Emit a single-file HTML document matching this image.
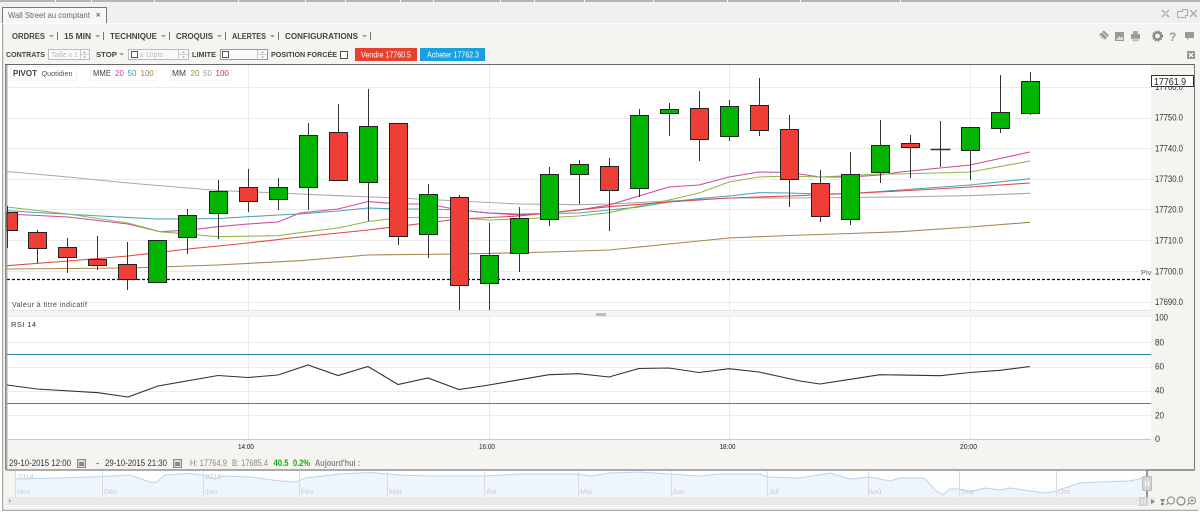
<!DOCTYPE html>
<html lang="fr"><head><meta charset="utf-8"><title>Wall Street au comptant</title>
<style>
html,body{margin:0;padding:0;width:1200px;height:512px;overflow:hidden;background:#fff}
body{position:relative;font-family:"Liberation Sans",Arial,sans-serif}
svg{position:absolute;left:0;top:0}
text{font-family:"Liberation Sans",Arial,sans-serif}
.b{font-weight:bold;fill:#444;font-size:8px}
.c{font-weight:bold;fill:#444;font-size:7.5px}
.p{font-size:9px;fill:#333}
</style></head><body>
<svg width="1200" height="512" viewBox="0 0 1200 512" xmlns="http://www.w3.org/2000/svg">
<!-- window chrome -->
<rect width="1200" height="512" fill="#f5f4f0"/>
<rect width="1200" height="23" fill="#f0f0f0"/>
<rect y="0" width="1200" height="2" fill="#b4b4b4"/>
<path d="M55.5 0V2M91.5 0V2M154.5 0V2M238.5 0V2M305.5 0V2M345.5 0V2M400.5 0V2M433.5 0V2M500.5 0V2M534.5 0V2M584.5 0V2M653.5 0V2M727.5 0V2M800.5 0V2M900.5 0V2" stroke="#fff"/>
<rect y="23" width="1200" height="1" fill="#fff"/>
<path d="M2.5 23V7.5H106.5V23" fill="#f7f7f7" stroke="#777"/>
<text x="8" y="18" font-size="8.5" fill="#666" textLength="82" lengthAdjust="spacingAndGlyphs">Wall Street au comptant</text>
<path d="M96.5 13l3.500 3.500M100 13l-3.500 3.500" stroke="#777" stroke-width="1"/>
<!-- window icons -->
<path d="M1162 10l3 3M1169 10l-3 3M1162 17l3-3M1169 17l-3-3" stroke="#aaa" stroke-width="1.5"/>
<path d="M1177.5 11.5h5v-2h5v6h-2v2h-8z" fill="none" stroke="#aaa"/>
<path d="M1190 10l7 7M1197 10l-7 7" stroke="#aaa" stroke-width="1.3"/>
<!-- toolbar -->
<text class="b" x="12" y="39" textLength="33" lengthAdjust="spacingAndGlyphs">ORDRES</text>
<text class="b" x="64" y="39" textLength="27" lengthAdjust="spacingAndGlyphs">15 MIN</text>
<text class="b" x="110" y="39" textLength="47" lengthAdjust="spacingAndGlyphs">TECHNIQUE</text>
<text class="b" x="176" y="39" textLength="37" lengthAdjust="spacingAndGlyphs">CROQUIS</text>
<text class="b" x="232" y="39" textLength="34" lengthAdjust="spacingAndGlyphs">ALERTES</text>
<text class="b" x="285" y="39" textLength="73" lengthAdjust="spacingAndGlyphs">CONFIGURATIONS</text>
<path d="M49 35h5l-2.5 2.5zM95 35h5l-2.5 2.5zM161 35h5l-2.5 2.5zM217 35h5l-2.5 2.5zM270 35h5l-2.5 2.5zM362 35h5l-2.5 2.5z" fill="#999"/>
<path d="M57.5 32V40M103.5 32V40M169.5 32V40M225.5 32V40M278.5 32V40M370.5 32V40" stroke="#777"/>
<!-- toolbar right icons -->
<path d="M1099 35l5-5 5 5-5 6z" fill="#999"/><path d="M1100 33l4-3 4 4M1100 37l5 4 3-3M1101 31l6 6M1100 35l5 5" stroke="#f5f4f0" fill="none" stroke-width=".7"/>
<rect x="1115" y="32" width="9" height="9" fill="#999"/><path d="M1116 40l3-4 2 2 2-2v4z" fill="#ddd"/>
<rect x="1131" y="34" width="9" height="5" rx="1" fill="#999"/><rect x="1133" y="31" width="5" height="3" fill="#aaa"/><rect x="1133" y="38" width="5" height="3" fill="#ccc" stroke="#999" stroke-width=".5"/>
<circle cx="1157.5" cy="36" r="3.5" fill="none" stroke="#888" stroke-width="2.2"/><circle cx="1157.5" cy="36" r="5" fill="none" stroke="#888" stroke-width="1.3" stroke-dasharray="1.5 1.5"/>
<text x="1169" y="41" font-size="12" font-weight="bold" fill="#999">?</text>
<path d="M1185 32h9v6h-5l-2 2v-2h-2z" fill="#999"/>
<!-- row 2 -->
<text class="c" x="6" y="57" textLength="39" lengthAdjust="spacingAndGlyphs">CONTRATS</text>
<text class="c" x="96" y="57" textLength="21" lengthAdjust="spacingAndGlyphs">STOP</text>
<text class="c" x="192" y="57" textLength="24" lengthAdjust="spacingAndGlyphs">LIMITE</text>
<text class="c" x="271" y="57" textLength="66" lengthAdjust="spacingAndGlyphs">POSITION FORCÉE</text>
<path d="M119 53h5l-2.5 2.5z" fill="#999"/>
<rect x="48.5" y="49.5" width="41" height="10" fill="#fafafa" stroke="#bbb"/><path d="M80.5 50V59M81 54.5H89" stroke="#ccc"/>
<text x="51" y="57" font-size="7" fill="#bbb" textLength="27" lengthAdjust="spacingAndGlyphs">Taille ≥ 1</text>
<path d="M83 53l1.5-1.500 1.500 1.500zM83 56.5l1.500 1.500 1.500-1.500z" fill="#999"/>
<rect x="128.5" y="49.5" width="60" height="10" fill="#fafafa" stroke="#bbb"/><path d="M178.5 50V59M179 54.5H188" stroke="#ccc"/>
<rect x="131.5" y="51.5" width="6" height="6" fill="#fff" stroke="#555"/>
<text x="140" y="57" font-size="7" fill="#bbb">≥ 10pts</text>
<path d="M182 53l1.5-1.500 1.500 1.500zM182 56.5l1.500 1.500 1.500-1.500z" fill="#999"/>
<rect x="220.5" y="49.5" width="47" height="10" fill="#fafafa" stroke="#999"/><path d="M257.5 50V59M258 54.5H267" stroke="#ccc"/>
<rect x="222.5" y="51.5" width="6" height="6" fill="#fff" stroke="#555"/>
<path d="M261 53l1.5-1.500 1.500 1.500zM261 56.5l1.500 1.500 1.500-1.500z" fill="#999"/>
<rect x="340.5" y="51.5" width="7" height="7" fill="#fff" stroke="#555"/>
<rect x="355" y="48" width="62" height="13" fill="#e8402f"/>
<text x="361" y="57.5" font-size="8" fill="#fff" textLength="50" lengthAdjust="spacingAndGlyphs">Vendre 17760.5</text>
<rect x="420" y="48" width="65" height="13" fill="#189fe0"/>
<text x="427" y="57.5" font-size="8" fill="#fff" textLength="52" lengthAdjust="spacingAndGlyphs">Acheter 17762.3</text>
<rect x="1187" y="51" width="8" height="8" fill="#999"/><path d="M1189 53l4 4M1193 53l-4 4" stroke="#fff" stroke-width="1.2"/>

<!-- chart frame -->
<rect x="6" y="65" width="1188" height="405" fill="#f5f4f0"/>
<rect x="7" y="65" width="1144" height="245" fill="#fff"/>
<rect x="7" y="317" width="1144" height="122" fill="#fff"/>
<path d="M1194.5 64.5H5.5V470" fill="none" stroke="#666"/>
<path d="M6.5 65V470" stroke="#aaa" stroke-width="2"/>
<path d="M1194.5 64V470" stroke="#777"/>
<rect x="6" y="469" width="1140" height="2" fill="#aaa"/><rect x="1146" y="469" width="49" height="2" fill="#999"/>
<!-- grid -->
<path d="M7 87.5H1151M7 118.5H1151M7 148.5H1151M7 179.5H1151M7 209.5H1151M7 240.5H1151M7 271.5H1151M7 302.5H1151M7 342.5H1151M7 367.5H1151M7 391.5H1151M7 415.5H1151M248.5 65V310M489.5 65V310M729.5 65V310M970.5 65V310M248.5 317V439M489.5 317V439M729.5 317V439M970.5 317V439" stroke="#ebebeb" fill="none"/>
<path d="M7 310.5H1151" stroke="#e4e4e0"/><path d="M7 316.5H1151" stroke="#ededea"/>
<rect x="596" y="313" width="10" height="3" fill="#bbb"/>
<path d="M7 439.5H1151" stroke="#c8c8c8"/>
<!-- dashed pivot -->
<path d="M7 279.5H1151" stroke="#111" stroke-width="1.2" stroke-dasharray="3 2"/>
<!-- moving averages -->
<g fill="none" stroke-width="1.1">
<polyline stroke="#a8a8a8" points="7,171.5 68,177 128,183 188,188 218,190.5 278,193 338,195.7 398,198 459,201 519,204 579,204.7 609,204 669,201 729,198 789,198 850,197.5 900,197 970,195.6 1030,193.3"/>
<polyline stroke="#4ba3b5" points="7,210.7 37,212.5 100,216 158,219 218,218.5 278,215 300,214 338,211 368,208 398,209 428,209 459,210 489,213 519,214 579,213 609,210 639,207 669,202 699,198.5 729,196 759,192.7 789,193 820,194 850,193.7 900,190 970,185 1030,178.7"/>
<polyline stroke="#cc4aa0" points="7,214 68,217 128,224 160,231.7 190,230 218,226.7 248,224 278,222 300,213 338,209 368,201.5 398,204 428,204 459,210 489,213 519,215 549,213 579,210 609,205 639,196 669,187 699,185 729,177 759,172 789,172.5 820,177 850,177 880,175 900,172 970,165 1030,152"/>
<polyline stroke="#8fb84a" points="7,207 68,214 128,223 160,231.7 218,236.7 278,235.7 300,232.7 338,228 368,221.5 398,218 428,217 459,218 489,220 519,219 579,216 609,212.7 639,206 669,200 699,193 729,182 759,177 789,176 820,177 850,175.5 880,174 900,174 970,172 1030,161"/>
<polyline stroke="#e0474a" points="7,265.7 68,261 128,256 188,249 248,243 300,237 368,230 459,219 519,216 609,206.7 669,202 729,198 789,196 850,193.5 900,191 970,187 1030,183"/>
<polyline stroke="#a8874f" points="7,269 68,268.5 128,268 218,265 300,260.7 368,255 459,254 549,252 609,250 669,244 729,238 789,235.5 850,233.5 900,231.7 970,227 1030,222.3"/>
</g>
<!-- wicks -->
<path stroke="#333" fill="none" d="M7.5 206V248M37.5 230V263M67.5 238V273M97.5 236V270M127.5 242V290M157.5 240V282M187.5 209V254M218.5 180V239M248.5 169V212M278.5 178V210M308.5 123V210M338.5 104V180M368.5 89V221M398.5 123V245M428.5 184V258M459.5 195V310M489.5 223V310M519.5 207V272M549.5 167V226M579.5 160V204M609.5 158V231M639.5 109V197M669.5 103V136M699.5 91V161M729.5 100V141M759.5 78V136M789.5 115V207M820.5 170V222M850.5 152V225M880.5 120V183M910.5 135V178M940.5 121V167M970.5 127V180M1000.5 75V133M1030.5 72V115"/>
<!-- red bodies -->
<g fill="#ef3e36" stroke="#222">
<rect x="7" y="212.5" width="10.5" height="18"/>
<rect x="28.5" y="232.5" width="18" height="16"/>
<rect x="58.5" y="247.5" width="18" height="10"/>
<rect x="88.5" y="259.5" width="18" height="6"/>
<rect x="118.5" y="264.5" width="18" height="15"/>
<rect x="239.5" y="187.5" width="18" height="14"/>
<rect x="329.5" y="132.5" width="18" height="48"/>
<rect x="389.5" y="123.5" width="18" height="113"/>
<rect x="450.5" y="197.5" width="18" height="88"/>
<rect x="600.5" y="166.5" width="18" height="24"/>
<rect x="690.5" y="108.5" width="18" height="31"/>
<rect x="750.5" y="105.5" width="18" height="25"/>
<rect x="780.5" y="129.5" width="18" height="50"/>
<rect x="811.5" y="183.5" width="18" height="33"/>
<rect x="901.5" y="143.5" width="18" height="4"/>
</g>
<!-- green bodies -->
<g fill="#00b400" stroke="#222">
<rect x="148.5" y="240.5" width="18" height="42"/>
<rect x="178.5" y="215.5" width="18" height="22"/>
<rect x="209.5" y="191.5" width="18" height="22"/>
<rect x="269.5" y="187.5" width="18" height="12"/>
<rect x="299.5" y="135.5" width="18" height="52"/>
<rect x="359.5" y="126.5" width="18" height="56"/>
<rect x="419.5" y="194.5" width="18" height="40"/>
<rect x="480.5" y="255.5" width="18" height="28"/>
<rect x="510.5" y="218.5" width="18" height="35"/>
<rect x="540.5" y="174.5" width="18" height="45"/>
<rect x="570.5" y="164.5" width="18" height="10"/>
<rect x="630.5" y="115.5" width="18" height="73"/>
<rect x="660.5" y="109.5" width="18" height="4"/>
<rect x="720.5" y="106.5" width="18" height="30"/>
<rect x="841.5" y="174.5" width="18" height="45"/>
<rect x="871.5" y="145.5" width="18" height="27"/>
<rect x="961.5" y="127.5" width="18" height="23"/>
<rect x="991.5" y="112.5" width="18" height="16"/>
<rect x="1021.5" y="81.5" width="18" height="32"/>
</g>
<path d="M930.5 149.5H950.5" stroke="#333" stroke-width="1.5"/>
<!-- legend -->
<g fill="#fff" stroke="#f3f3f3"><rect x="10.5" y="66.5" width="66" height="14"/><rect x="90.5" y="66.5" width="66" height="14"/><rect x="170.5" y="66.5" width="61" height="14"/></g>
<text class="b" x="13" y="76" textLength="24" lengthAdjust="spacingAndGlyphs">PIVOT</text>
<text x="41.5" y="76" font-size="7.5" fill="#555" textLength="31" lengthAdjust="spacingAndGlyphs">Quotidien</text>
<text x="93" y="76" font-size="8" fill="#444" textLength="18" lengthAdjust="spacingAndGlyphs">MME</text><text x="115" y="76" font-size="8" fill="#c8409a">20</text><text x="127.5" y="76" font-size="8" fill="#4a97b5">50</text><text x="140.5" y="76" font-size="8" fill="#a0804a">100</text>
<text x="172" y="76" font-size="8" fill="#444" textLength="14" lengthAdjust="spacingAndGlyphs">MM</text><text x="190.5" y="76" font-size="8" fill="#6fa53a">20</text><text x="203" y="76" font-size="8" fill="#999">50</text><text x="215.5" y="76" font-size="8" fill="#d03a3a">100</text>
<text x="12" y="307" font-size="7" fill="#444" textLength="75" lengthAdjust="spacing">Valeur à titre <tspan fill="#7a3a6a">i</tspan>ndicatif</text>
<rect x="8" y="318" width="32" height="13" fill="#fff"/>
<text x="11" y="327" font-size="7.5" fill="#333" textLength="25" lengthAdjust="spacing">RSI 14</text>
<text x="1141" y="275" font-size="7.5" fill="#666">Piv</text>
<!-- price scale -->
<g lengthAdjust="spacingAndGlyphs">
<text class="p" x="1155" y="120.5" textLength="28" lengthAdjust="spacingAndGlyphs">17750.0</text>
<text class="p" x="1155" y="151.5" textLength="28" lengthAdjust="spacingAndGlyphs">17740.0</text>
<text class="p" x="1155" y="182" textLength="28" lengthAdjust="spacingAndGlyphs">17730.0</text>
<text class="p" x="1155" y="212.5" textLength="28" lengthAdjust="spacingAndGlyphs">17720.0</text>
<text class="p" x="1155" y="243.5" textLength="28" lengthAdjust="spacingAndGlyphs">17710.0</text>
<text class="p" x="1155" y="274.5" textLength="28" lengthAdjust="spacingAndGlyphs">17700.0</text>
<text class="p" x="1155" y="305" textLength="28" lengthAdjust="spacingAndGlyphs">17690.0</text>
<text class="p" x="1155" y="320.5" textLength="13" lengthAdjust="spacingAndGlyphs">100</text>
<text class="p" x="1155" y="345.5" textLength="9" lengthAdjust="spacingAndGlyphs">80</text>
<text class="p" x="1155" y="369.5" textLength="9" lengthAdjust="spacingAndGlyphs">60</text>
<text class="p" x="1155" y="393.5" textLength="9" lengthAdjust="spacingAndGlyphs">40</text>
<text class="p" x="1155" y="418.5" textLength="9" lengthAdjust="spacingAndGlyphs">20</text>
<text class="p" x="1155" y="442">0</text>
</g>
<text class="p" x="1155" y="90" textLength="28" lengthAdjust="spacingAndGlyphs">17760.0</text>
<rect x="1151.5" y="75.500" width="42" height="11" fill="#fff" stroke="#333"/>
<text x="1154" y="85" font-size="10" fill="#222" textLength="32" lengthAdjust="spacingAndGlyphs">17761.9</text>
<!-- time labels -->
<g font-size="7.5" fill="#222"><text x="238" y="449" textLength="16" lengthAdjust="spacingAndGlyphs">14:00</text><text x="479" y="449" textLength="16" lengthAdjust="spacingAndGlyphs">16:00</text><text x="719.5" y="449" textLength="16" lengthAdjust="spacingAndGlyphs">18:00</text><text x="960" y="449" textLength="17" lengthAdjust="spacingAndGlyphs">20:00</text></g>
<!-- rsi lines -->
<path d="M7 354.5H1151" stroke="#2e86a5"/>
<path d="M7 403.5H1151" stroke="#e0474a"/>
<polyline fill="none" stroke="#333" stroke-width="1.1" points="7,385 37,389 98,392.7 128,397 158,386 218,375.5 248,377.5 278,375 308,365 338,375.5 368,366.5 398,384.5 428,378 459,389.5 489,385 549,374.7 579,373.7 609,377 639,368.5 669,368 699,372.5 729,368.7 759,372 800,381 820,384 880,374.7 940,375.7 970,372.5 1000,370.3 1030,366.5"/>
<!-- footer -->
<g font-size="9.5" fill="#333"><text x="9" y="466" textLength="62" lengthAdjust="spacingAndGlyphs">29-10-2015 12:00</text><text x="96" y="466">-</text><text x="105" y="466" textLength="62" lengthAdjust="spacingAndGlyphs">29-10-2015 21:30</text></g>
<path d="M77.5 459.5h8v8h-8zM173.5 459.5h8v8h-8z" fill="#ddd" stroke="#888"/><path d="M79 462h5v4h-5zM175 462h5v4h-5z" fill="#888"/>
<g font-size="9.5" fill="#888"><text x="190" y="466" textLength="37" lengthAdjust="spacingAndGlyphs">H: 17764.9</text><text x="232" y="466" textLength="36" lengthAdjust="spacingAndGlyphs">B: 17685.4</text></g>
<g font-size="9.5" font-weight="bold" fill="#18a818"><text x="273.5" y="466" textLength="15" lengthAdjust="spacingAndGlyphs">40.5</text><text x="293" y="466" textLength="17" lengthAdjust="spacingAndGlyphs">0.2%</text></g>
<text x="315" y="466" font-size="9.5" font-weight="bold" fill="#888" textLength="45" lengthAdjust="spacingAndGlyphs">Aujourd'hui :</text>
<!-- navigator -->
<defs><linearGradient id="g" x1="0" y1="0" x2="0" y2="1"><stop offset="0" stop-color="#fff"/><stop offset="1" stop-color="#fafcfe"/></linearGradient></defs>
<rect x="16" y="471" width="1131" height="26" fill="url(#g)"/>
<polygon fill="#eef5fc" points="16,479 60,478 102,476.5 130,475 150,482 156,482.5 165,475 190,473.5 203,475 215,479 222,476 250,477 280,481 296,482 305,478 340,474 370,472.5 400,475 430,476 484,476 520,474 578,474 590,476 610,473 640,472 670,474 700,476 720,474 760,474 767,477 800,478 830,473 850,479 870,477 890,481 900,478 920,478 925,479 935,490 943,495 950,489 960,489 970,492 985,488 1000,490 1010,488 1030,491 1045,493 1056,491 1080,483 1100,482 1130,481 1147,477 1147,497 16,497"/>
<polyline fill="none" stroke="#b8d4f0" points="16,479 60,478 102,476.5 130,475 150,482 156,482.5 165,475 190,473.5 203,475 215,479 222,476 250,477 280,481 296,482 305,478 340,474 370,472.5 400,475 430,476 484,476 520,474 578,474 590,476 610,473 640,472 670,474 700,476 720,474 760,474 767,477 800,478 830,473 850,479 870,477 890,481 900,478 920,478 925,479 935,490 943,495 950,489 960,489 970,492 985,488 1000,490 1010,488 1030,491 1045,493 1056,491 1080,483 1100,482 1130,481 1147,477"/>
<path d="M15.5 471V497M102.5 471V497M203.5 471V497M299.5 471V497M387.5 471V497M484.5 471V497M578.5 471V497M671.5 471V497M767.5 471V497M868.5 471V497M959.5 471V497M1056.5 471V497" stroke="#dcdcdc"/>
<g font-size="7.5" fill="#ccc"><text x="17" y="479">2014</text><text x="205" y="479">2015</text><text x="17" y="494">Nov</text><text x="104" y="494">Déc</text><text x="205" y="494">Jan</text><text x="301" y="494">Fév</text><text x="389" y="494">Mar</text><text x="486" y="494">Avr</text><text x="580" y="494">Mai</text><text x="672" y="494">Jun</text><text x="769" y="494">Jul</text><text x="868" y="494">Aoû</text><text x="961" y="494">Sep</text><text x="1058" y="494">Oct</text></g>
<rect x="7" y="497" width="1148" height="8" fill="#e9e9e7"/>
<rect x="3" y="471" width="3" height="36" fill="#f5f4f0"/>
<path d="M11 501l-2-2v4z" fill="#999"/>
<rect x="1146" y="471" width="2" height="26" fill="#8a98a6"/>
<rect x="1142.5" y="476.5" width="9" height="14" rx="1" fill="#d6d6d2" stroke="#bbb"/>
<path d="M1145.5 481V486M1148.5 481V486" stroke="#fff"/>
<rect x="1139" y="497" width="9" height="9" fill="#d2d2d0"/><path d="M1142 499V504M1145 499V504" stroke="#f5f5f5"/>
<path d="M1151 499l4 2.5-4 2.500z" fill="#888"/>
<path d="M1160 499h5l-2.5 4zM1161 503h3v2h-3z" fill="#888"/>
<circle cx="1171" cy="500.5" r="3.5" fill="none" stroke="#888"/><path d="M1168 503l-2 2" stroke="#888"/>
<circle cx="1181" cy="501" r="4" fill="none" stroke="#888" stroke-width="1.2"/>
<circle cx="1192" cy="500.5" r="3.5" fill="none" stroke="#888"/><path d="M1189 503l-2 2M1190.5 500.5h3M1192 499v3" stroke="#888"/>
<!-- outer border -->
<path d="M2.5 24V510.5H1198" fill="none" stroke="#aaa" stroke-width="1.5"/>
<rect y="511" width="1200" height="1" fill="#fff"/><rect width="2" y="24" height="488" fill="#fff"/>
</svg>
</body></html>
